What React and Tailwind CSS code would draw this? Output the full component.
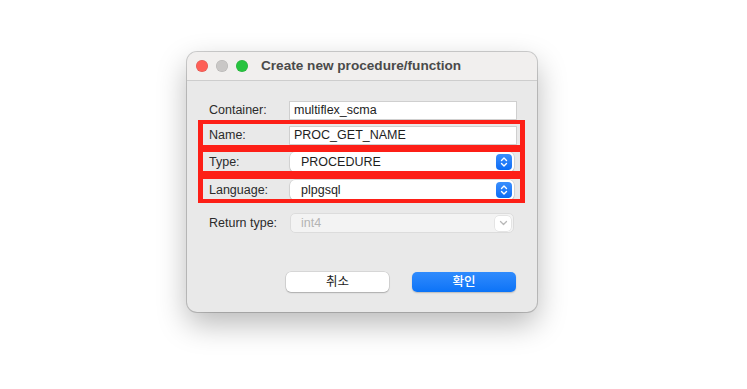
import React from 'react';

const Stepper = () => (
  <span className="flex h-[16px] w-[16px] items-center justify-center rounded-[4px] bg-gradient-to-b from-[#3a8ffd] to-[#0a6cf5]">
    <svg width="10" height="12" viewBox="0 0 10 12" fill="none" stroke="white" strokeWidth="1.4" strokeLinecap="round" strokeLinejoin="round">
      <path d="M2.5 4.5 L5 2 L7.5 4.5" />
      <path d="M2.5 7.5 L5 10 L7.5 7.5" />
    </svg>
  </span>
);

const Row = ({ label, children, className }) => (
  <div className={`flex items-center ${className}`}>
    <div className="w-[80px] shrink-0 text-[12.5px] text-[#2b2b2b]">{label}</div>
    <div className="flex-1">{children}</div>
  </div>
);

const TextField = ({ value }) => (
  <div className="flex h-[19px] items-center border border-[#cfcfcf] bg-white px-[4px] text-[12.5px] text-[#1e1e1e]">
    {value}
  </div>
);

const Popup = ({ value }) => (
  <div className="ml-[1px] mr-[3px] flex h-[20px] items-center justify-between rounded-[5px] bg-white pl-[11px] pr-[2px] text-[12.5px] text-[#1e1e1e] shadow-[0_0_0_0.5px_rgba(0,0,0,0.12),0_1px_1.5px_rgba(0,0,0,0.2)]">
    <span>{value}</span>
    <Stepper />
  </div>
);

const App = () => {
  return (
    <div className="h-[389px] w-[747px] bg-white pl-[187px] pt-[52px]" style={{ fontFamily: '"Liberation Sans", "Noto Sans CJK KR", sans-serif' }}>
      <div className="relative flex h-[260px] w-[350px] flex-col overflow-hidden rounded-[10px] bg-[#e9e9e9] shadow-[0_12px_30px_rgba(0,0,0,0.28),0_0_0_1px_rgba(0,0,0,0.18)]">
        {/* title bar */}
        <div className="flex h-[29px] shrink-0 items-center border-b border-[#cdcdcd] bg-[#f1efee] pl-[9px]">
          <span className="h-[12px] w-[12px] rounded-full bg-[#fe5f57] shadow-[inset_0_0_0_0.5px_rgba(0,0,0,0.15)]" />
          <span className="ml-[8px] h-[12px] w-[12px] rounded-full bg-[#c9c7c6] shadow-[inset_0_0_0_0.5px_rgba(0,0,0,0.12)]" />
          <span className="ml-[8px] h-[12px] w-[12px] rounded-full bg-[#27c33f] shadow-[inset_0_0_0_0.5px_rgba(0,0,0,0.12)]" />
          <span className="ml-[13px] text-[13.6px] font-bold text-[#4a4a4a]">Create new procedure/function</span>
        </div>

        {/* form */}
        <div className="flex flex-col pl-[22px] pr-[20px]">
          <Row label="Container:" className="mt-[20px]">
            <TextField value="multiflex_scma" />
          </Row>
          <Row label="Name:" className="mt-[6px]">
            <TextField value="PROC_GET_NAME" />
          </Row>
          <Row label="Type:" className="mt-[7px]">
            <Popup value="PROCEDURE" />
          </Row>
          <Row label="Language:" className="mt-[8px]">
            <Popup value="plpgsql" />
          </Row>
          <Row label="Return type:" className="mt-[13px]">
            <div className="ml-[1px] mr-[3px] flex h-[20px] items-center justify-between rounded-[5px] border border-[#dcdcdc] bg-[#f3f3f3] pl-[10px] pr-[2px] text-[12.5px] text-[#b4b4b4]">
              <span>int4</span>
              <span className="flex h-[15px] w-[16px] items-center justify-center rounded-[4px] bg-white shadow-[0_0_0_0.5px_rgba(0,0,0,0.12)]">
                <svg width="9" height="6" viewBox="0 0 9 6" fill="none" stroke="#b8b8b8" strokeWidth="1.3" strokeLinecap="round" strokeLinejoin="round">
                  <path d="M1.5 1.5 L4.5 4.5 L7.5 1.5" />
                </svg>
              </span>
            </div>
          </Row>
          <div className="mt-[39px] flex justify-end gap-[23px] pr-[1px]">
            <button className="h-[20px] w-[103px] rounded-[5px] bg-white text-[12.5px] text-[#222] shadow-[0_0_0_0.5px_rgba(0,0,0,0.15),0_1px_1.5px_rgba(0,0,0,0.2)]">
              취소
            </button>
            <button className="h-[20px] w-[104px] rounded-[5px] bg-gradient-to-b from-[#2f8bfd] to-[#0a73f7] text-[12.5px] font-medium text-white shadow-[0_1px_1.5px_rgba(0,0,0,0.2)]">
              확인
            </button>
          </div>
        </div>

        {/* red highlight boxes */}
        <div className="absolute left-[11px] top-[68px] h-[29px] w-[327px] border-[4px] border-x-[5px] border-[#fd1f17]" />
        <div className="absolute left-[11px] top-[96px] h-[27px] w-[327px] border-[4px] border-x-[5px] border-[#fd1f17]" />
        <div className="absolute left-[11px] top-[123px] h-[28px] w-[327px] border-[4px] border-x-[5px] border-[#fd1f17]" />
      </div>
    </div>
  );
};

export default App;
